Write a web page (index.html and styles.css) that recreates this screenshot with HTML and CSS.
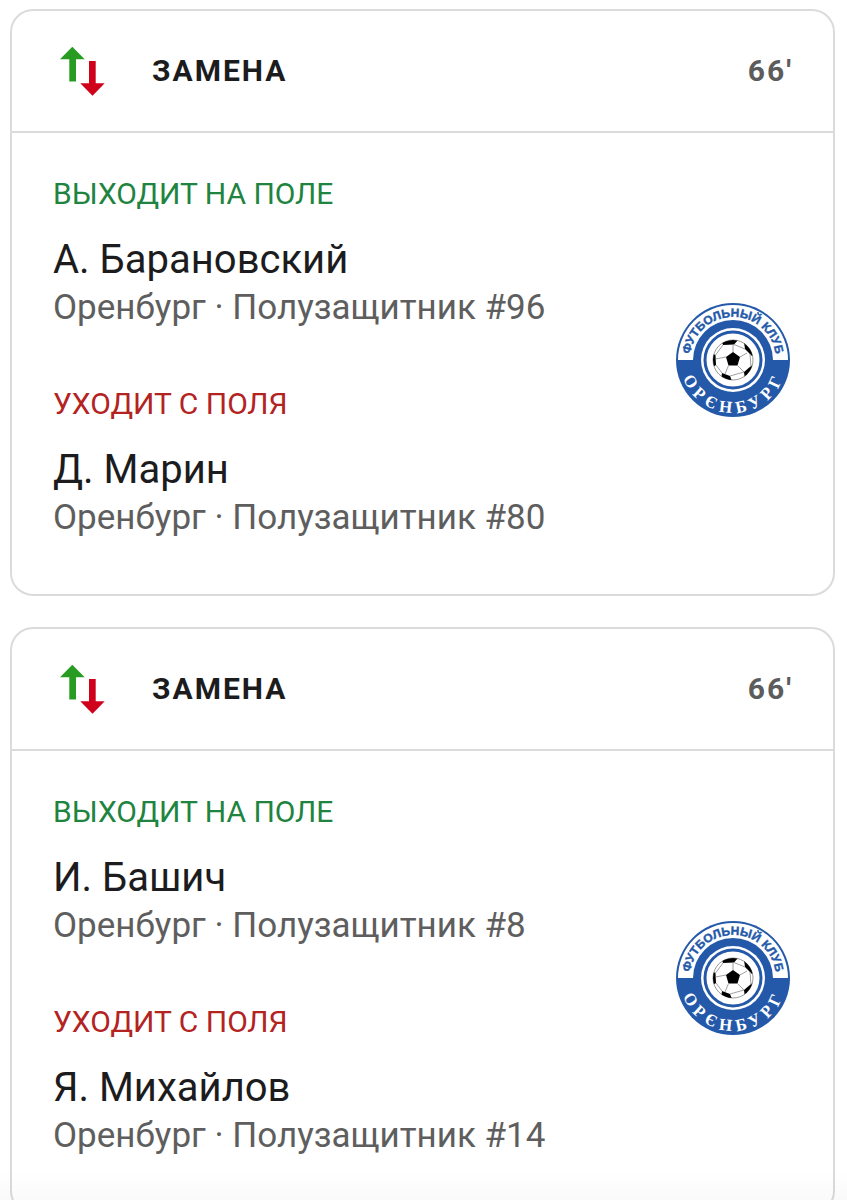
FILE: index.html
```
<!DOCTYPE html>
<html lang="ru">
<head>
<meta charset="utf-8">
<meta name="viewport" content="width=device-width, initial-scale=1">
<title>Замены</title>
<link rel="stylesheet" href="styles.css">
</head>
<body>

<!-- shared shapes for the club crests -->
<svg class="defs" width="0" height="0" aria-hidden="true">
  <defs>
    <path id="arc-top" d="M-43 0 A43 43 0 0 1 43 0"/>
    <path id="arc-bottom" d="M-53 0 A53 53 0 0 0 53 0"/>
    <clipPath id="ball-clip"><circle r="20"/></clipPath>
    <g id="crest-base">
      <circle r="57" fill="#2459a9"/>
      <path d="M-55 0 A55 55 0 0 1 55 0 H40 A40 40 0 0 0 -40 0Z" fill="#fff"/>
      <circle r="32" fill="#fff"/>
      <circle r="28" fill="none" stroke="#2459a9" stroke-width="3"/>
      <circle r="20" fill="#fff" stroke="#555" stroke-width=".6"/>
      <g clip-path="url(#ball-clip)">
        <path d="M0 -8 L7 -3 L4.500 5.500 L-4.500 5.500 L-7 -3Z" fill="#000"/>
        <path d="M-12 -21 L6 -21 L1 -15.500 L-10 -15Z M11 -18 L22 -6 L19 -4 L12 -11Z M22 4 L12 20 L11 12 L18 6Z M-11 13 L-3 16 L-1 21 L-12 20Z M-22 -7 L-17.500 -5 L-17 5 L-22 8Z" fill="#000"/>
        <path d="M0 -8 V-16 M7 -3 L14 -7 M4.500 5.500 L11 12 M-4.500 5.500 L-8 14 M-7 -3 L-17.500 -1 M-10 -15 L-17.500 -5 M1 -15.500 L12 -11 M17 -6 L18 7 M11 12 L-3 16 M-17 5 L-11 13" fill="none" stroke="#888" stroke-width=".8"/>
      </g>
    </g>
  </defs>
</svg>

<main class="feed">

  <article class="card">
    <header class="card-head">
      <svg class="swap" viewBox="0 0 60 60" aria-hidden="true">
        <path fill="#289b22" d="M19.300 5.700 L31.700 18.300 H23 V40.500 H16.300 V18.300 H7Z"/>
        <path fill="#d0021b" d="M36 20 H42.700 V42.300 H51.700 L39.500 54.700 L27.300 42.300 H36Z"/>
      </svg>
      <h2 class="title">ЗАМЕНА</h2>
      <span class="minute">66'</span>
    </header>
    <div class="card-body">
      <div class="players">
        <section class="player">
          <h3 class="label in">ВЫХОДИТ НА ПОЛЕ</h3>
          <p class="name">А. Барановский</p>
          <p class="info">Оренбург · Полузащитник #96</p>
        </section>
        <section class="player">
          <h3 class="label out">УХОДИТ С ПОЛЯ</h3>
          <p class="name">Д. Марин</p>
          <p class="info">Оренбург · Полузащитник #80</p>
        </section>
      </div>
      <svg class="crest" viewBox="-60 -60 120 120" role="img" aria-label="Футбольный клуб Оренбург">
        <use href="#crest-base"/>
        <text class="crest-top"><textPath href="#arc-top" startOffset="50%">ФУТБОЛЬНЫЙ КЛУБ</textPath></text>
        <text class="crest-bottom"><textPath href="#arc-bottom" startOffset="51%">ОРЄНБУРГ</textPath></text>
      </svg>
    </div>
  </article>

  <article class="card">
    <header class="card-head">
      <svg class="swap" viewBox="0 0 60 60" aria-hidden="true">
        <path fill="#289b22" d="M19.300 5.700 L31.700 18.300 H23 V40.500 H16.300 V18.300 H7Z"/>
        <path fill="#d0021b" d="M36 20 H42.700 V42.300 H51.700 L39.500 54.700 L27.300 42.300 H36Z"/>
      </svg>
      <h2 class="title">ЗАМЕНА</h2>
      <span class="minute">66'</span>
    </header>
    <div class="card-body">
      <div class="players">
        <section class="player">
          <h3 class="label in">ВЫХОДИТ НА ПОЛЕ</h3>
          <p class="name">И. Башич</p>
          <p class="info">Оренбург · Полузащитник #8</p>
        </section>
        <section class="player">
          <h3 class="label out">УХОДИТ С ПОЛЯ</h3>
          <p class="name">Я. Михайлов</p>
          <p class="info">Оренбург · Полузащитник #14</p>
        </section>
      </div>
      <svg class="crest" viewBox="-60 -60 120 120" role="img" aria-label="Футбольный клуб Оренбург">
        <use href="#crest-base"/>
        <text class="crest-top"><textPath href="#arc-top" startOffset="50%">ФУТБОЛЬНЫЙ КЛУБ</textPath></text>
        <text class="crest-bottom"><textPath href="#arc-bottom" startOffset="51%">ОРЄНБУРГ</textPath></text>
      </svg>
    </div>
  </article>

</main>
<div class="fade"></div>
</body>
</html>
```
FILE: styles.css
```
*{box-sizing:border-box}
body{margin:0;height:100vh;overflow:hidden;background:#fff;color:#1c1c1e;font-family:Roboto,"Liberation Sans",sans-serif}
h2,h3,p{margin:0;font-weight:400}
.defs{position:absolute}

.feed{display:flex;flex-direction:column;gap:31px;padding:9px 12px 9px 10px}
.card{border:2px solid #d9dbdd;border-radius:23px}

.card-head{display:flex;align-items:center;padding:30px 40px 30px 41px;border-bottom:2px solid #d9dbdd}
.swap{width:60px;height:60px;flex:none}
.title{margin-left:39px;flex:1;font-size:30px;line-height:40px;font-weight:700;letter-spacing:2px}
.minute{font-size:30px;line-height:40px;font-weight:700;letter-spacing:2px;color:#5c5c5c}

.card-body{display:flex;align-items:center;justify-content:space-between;padding:41px 40px 48px 41px}
.players{display:flex;flex-direction:column;gap:52px;padding-bottom:4px}
.label{font-size:30px;line-height:40px;margin-bottom:22px}
.in{color:#1e8440}
.out{color:#b3231f}
.name{font-size:40px;line-height:48px}
.info{font-size:35px;line-height:48px;color:#5e5e5e}

.crest{width:120px;height:120px;flex:none}
.crest text{text-anchor:middle}
.crest-top{font:700 12px "Liberation Sans",sans-serif;fill:#2459a9;stroke:#2459a9;stroke-width:.4px}
.crest-bottom{font:700 17px "Liberation Serif",serif;letter-spacing:5px;fill:#fff}

.fade{position:fixed;left:0;right:0;bottom:0;height:30px;background:linear-gradient(transparent,rgba(0,0,0,.02));pointer-events:none}
```
